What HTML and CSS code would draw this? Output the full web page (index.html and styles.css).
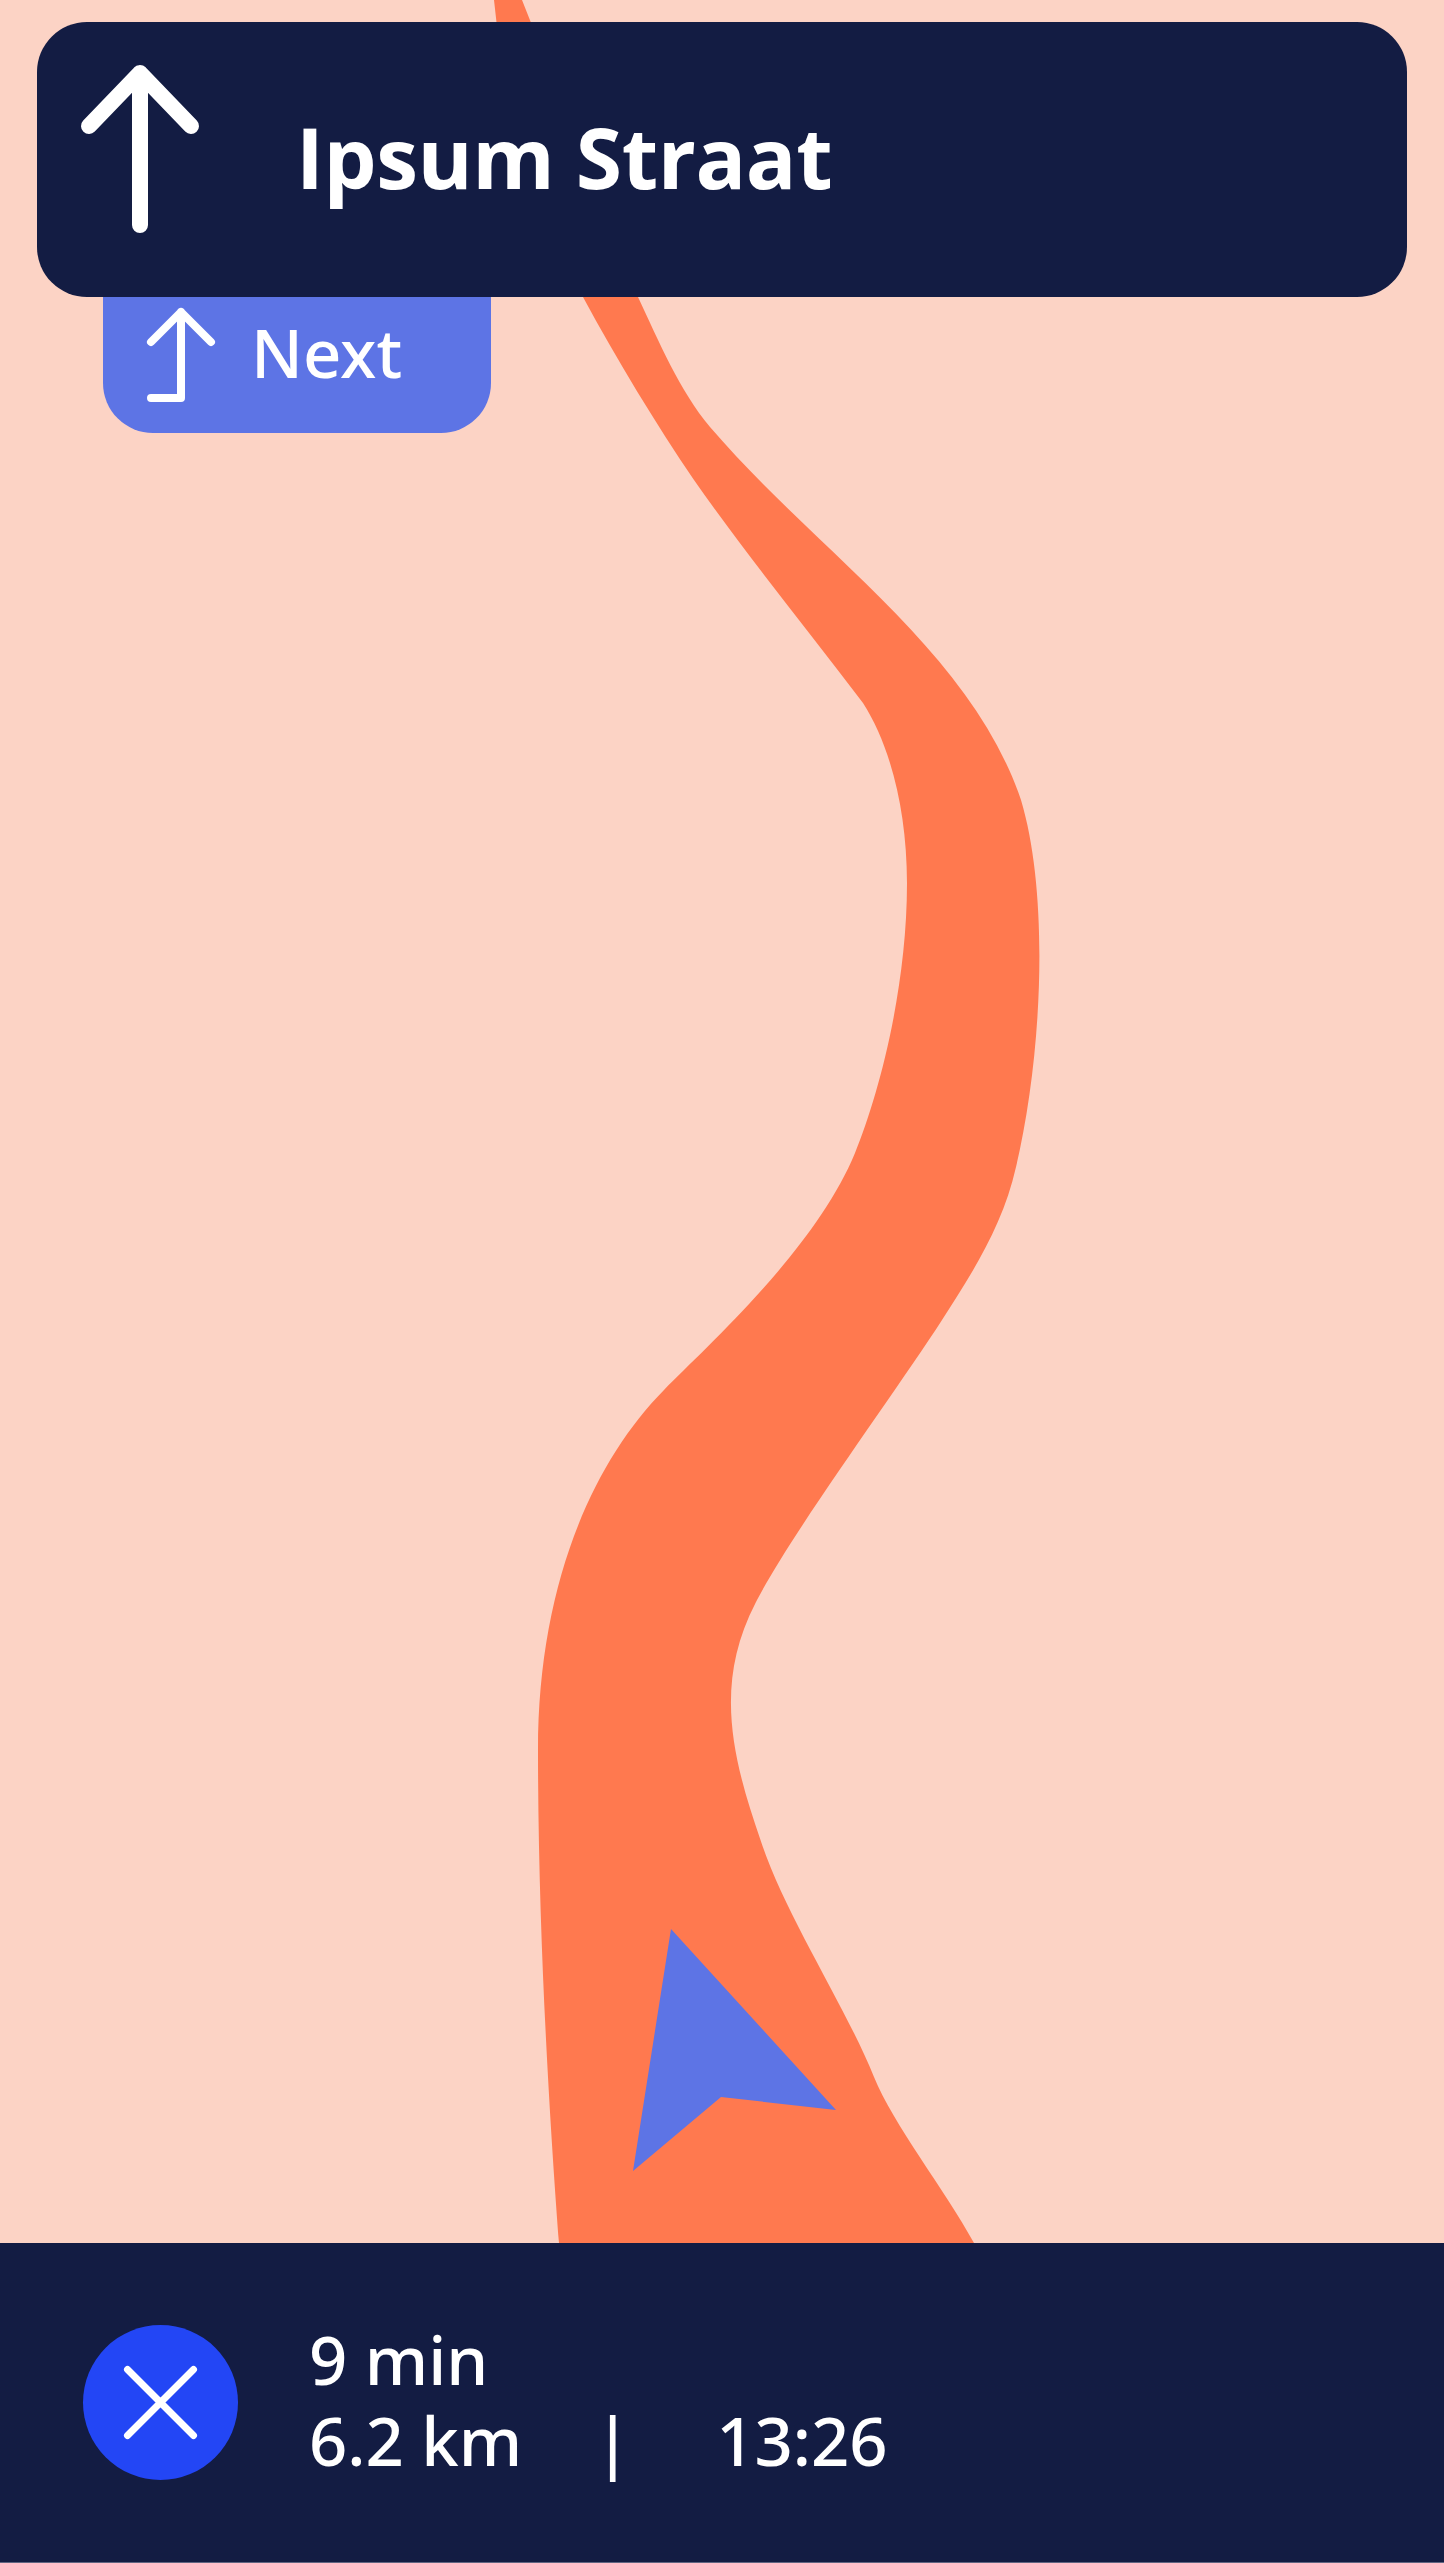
FILE: index.html
```html
<!DOCTYPE html>
<html lang="en">
<head>
  <meta charset="UTF-8" />
  <meta name="viewport" content="width=device-width, initial-scale=1.0" />
  <title>Navigation</title>
  <link rel="stylesheet" href="styles.css">
</head>
<body>
  <div class="screen">
    <main class="map">
      <svg class="map-art" viewBox="0 0 1444 2243" aria-hidden="true">
        <path class="road" d="M494 0 L522 0
          C562 98 592 202 638 297
          C659 342 680 391 710 427
          C820 555 970 650 1021 800
          C1050 897 1042 1057 1016 1167
          C1003 1225 973 1272 942 1320
          C897 1390 790 1535 755.5 1603
          C713 1685 733 1760 760.5 1840
          C785 1915 845 2005 874 2077
          C893 2124 945 2190 974 2243
          L559 2243
          C552 2150 538 1950 538 1750
          C538 1590 590 1465 664 1390
          C706 1347 815 1250 855 1153
          C878 1097 907 990 907 883
          C907 810 890 745 863 703
          C807 629 745 553 694 480
          C656 424 617 360 583 297
          C533 207 504 103 494 0 Z" />
        <polygon class="position" points="671,1929 836,2110 721,2097 633,2171" />
      </svg>

      <section class="route">
        <div class="street">
          <svg class="street-icon" viewBox="0 0 130 176" aria-hidden="true">
            <path d="M14 65 L65 12 L116 65 M65 12 V164" />
          </svg>
          <h1 class="street-name">Ipsum Straat</h1>
        </div>
        <div class="next">
          <svg class="next-icon" viewBox="0 0 74 100" aria-hidden="true">
            <path d="M7 38 L37 8 L67 38 M37 8 V94 H7" />
          </svg>
          <span class="next-label">Next</span>
        </div>
      </section>
    </main>

    <footer class="trip">
      <button class="close" type="button" aria-label="Stop navigation">
        <svg class="close-icon" viewBox="0 0 155 155" aria-hidden="true">
          <path d="M44.5 44.5 L110.5 110.5 M110.5 44.5 L44.5 110.5" />
        </svg>
      </button>
      <div class="trip-info">
        <div>9 min</div>
        <div class="trip-row">
          <span>6.2 km</span>
          <span class="trip-sep">|</span>
          <span>13:26</span>
        </div>
      </div>
    </footer>
  </div>
</body>
</html>
```

FILE: styles.css
```css
body {
  font-family: "Open Sans", "Noto Sans", sans-serif;
  background: #fcd3c5;
  color: white;
  margin: 0;
  padding: 0;
}
.screen {
  display: flex;
  flex-direction: column;
  height: 2563px;
}
.map {
  position: relative;
  height: 2243px;
  overflow: hidden;
}
.map-art {
  position: absolute;
  top: 0;
  left: 0;
  width: 1444px;
  height: 2243px;
}
.road {
  fill: #ff794f;
}
.position {
  fill: #5d74e5;
}
.route {
  position: absolute;
  top: 22px;
  left: 37px;
  width: 1370px;
}
.street {
  display: flex;
  align-items: center;
  gap: 91px;
  height: 275px;
  padding-left: 38px;
  box-sizing: border-box;
  background: #131c43;
  border-radius: 50px;
}
.street-icon {
  width: 130px;
  height: 176px;
  flex: none;
  margin-top: -21px;
}
.street-icon path {
  fill: none;
  stroke: white;
  stroke-width: 16;
  stroke-linecap: round;
  stroke-linejoin: round;
}
.street-name {
  margin: -6px 0 0;
  font-size: 84px;
  font-weight: 700;
  letter-spacing: -0.4px;
}
.next {
  display: flex;
  align-items: flex-start;
  gap: 33px;
  width: 388px;
  height: 136px;
  margin-left: 66px;
  padding: 7px 0 0 41px;
  box-sizing: border-box;
  background: #5d74e5;
  border-radius: 0 0 50px 50px;
}
.next-icon {
  width: 74px;
  height: 100px;
  flex: none;
}
.next-icon path {
  fill: none;
  stroke: white;
  stroke-width: 8;
  stroke-linecap: round;
  stroke-linejoin: round;
}
.next-label {
  margin-top: 2px;
  font-family: "Noto Sans", sans-serif;
  font-size: 67px;
  font-weight: 500;
}
.trip {
  display: flex;
  align-items: center;
  gap: 71px;
  height: 320px;
  padding-left: 83px;
  box-sizing: border-box;
  background: #131c43;
  border-bottom: 1px solid #5f6582;
}
.close {
  width: 155px;
  height: 155px;
  flex: none;
  padding: 0;
  border: none;
  border-radius: 50%;
  background: #2346f5;
}
.close-icon {
  display: block;
  width: 155px;
  height: 155px;
}
.close-icon path {
  fill: none;
  stroke: white;
  stroke-width: 7;
  stroke-linecap: round;
}
.trip-info {
  margin-top: -5px;
  font-family: "Noto Sans", sans-serif;
  font-size: 67px;
  font-weight: 500;
  line-height: 81px;
}
.trip-row {
  display: flex;
}
.trip-sep {
  margin: 0 85px 0 72px;
}
```
